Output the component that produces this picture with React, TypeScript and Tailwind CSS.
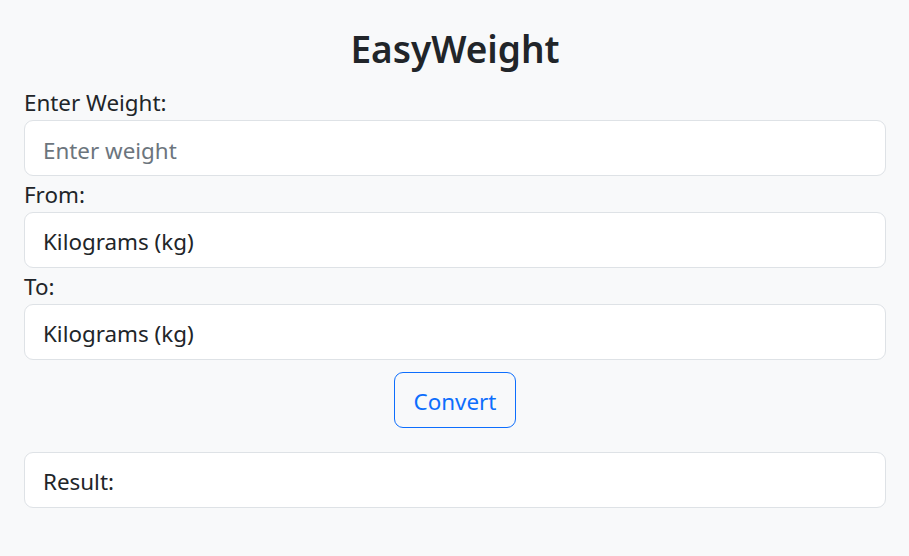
import React from "react";

export default function App() {
  return (
    <div className="min-h-[556px] w-full bg-[#f8f9fa] text-[#212529] font-['Noto_Sans',_sans-serif]">
      <div className="pl-[24px] pr-[23px] pt-[27px] flex flex-col">
        <h1 className="text-center text-[37px] leading-[43px] font-semibold mb-[14px]">EasyWeight</h1>
        <label className="text-[22.4px] leading-[34px] pt-[2px]">Enter Weight:</label>
        <input
          type="text"
          placeholder="Enter weight"
          className="h-[56px] w-full rounded-[9px] border border-[#dee2e6] bg-white px-[18px] pt-[4px] text-[22.4px] text-[#212529] placeholder:text-[#6c757d] outline-none"
        />
        <label className="text-[22.4px] leading-[34px] pt-[2px]">From:</label>
        <select className="h-[56px] w-full appearance-none rounded-[9px] border border-[#dee2e6] bg-white px-[18px] pt-[4px] text-[22.4px] text-[#212529] outline-none">
          <option>Kilograms (kg)</option>
        </select>
        <label className="text-[22.4px] leading-[34px] pt-[2px]">To:</label>
        <select className="h-[56px] w-full appearance-none rounded-[9px] border border-[#dee2e6] bg-white px-[18px] pt-[4px] text-[22.4px] text-[#212529] outline-none">
          <option>Kilograms (kg)</option>
        </select>
        <div className="flex justify-center mt-[12px] mb-[24px]">
          <button className="h-[56px] w-[122px] rounded-[9px] border border-[#0d6efd] bg-transparent pt-[4px] text-[22.4px] text-[#0d6efd]">
            Convert
          </button>
        </div>
        <div className="flex h-[56px] w-full items-center rounded-[9px] border border-[#dee2e6] bg-white px-[18px] pt-[4px] text-[22.4px]">
          Result:
        </div>
      </div>
    </div>
  );
}
